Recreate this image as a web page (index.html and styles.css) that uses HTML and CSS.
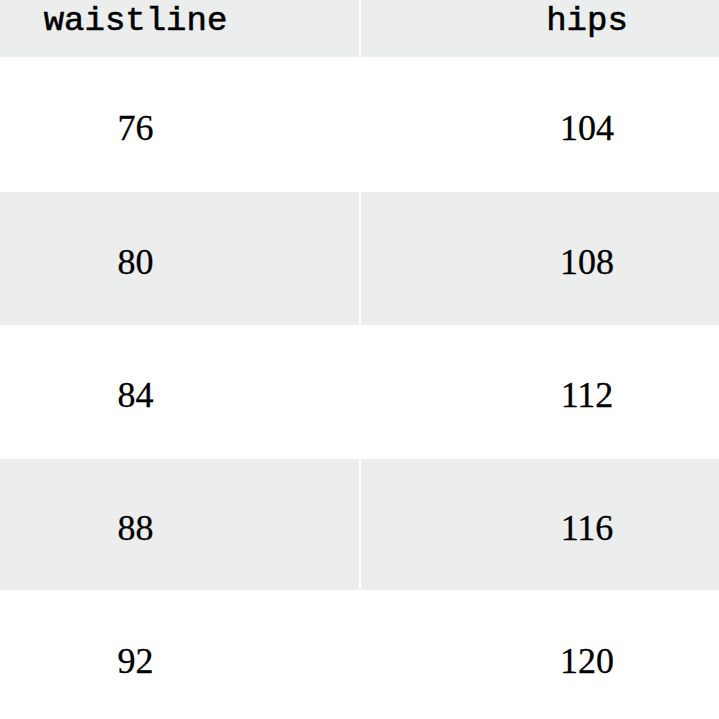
FILE: index.html
```html
<!DOCTYPE html>
<html>
<head>
<meta charset="utf-8">
<link rel="stylesheet" href="styles.css">
</head>
<body>
<div class="viewport">
<div class="table">
  <div class="cell head">waistline</div>
  <div class="cell head">hips</div>
  <div class="cell r1">76</div>
  <div class="cell r1">104</div>
  <div class="cell r2 alt">80</div>
  <div class="cell r2 alt">108</div>
  <div class="cell r3">84</div>
  <div class="cell r3">112</div>
  <div class="cell r4 alt">88</div>
  <div class="cell r4 alt">116</div>
  <div class="cell r5">92</div>
  <div class="cell r5">120</div>
</div>
</div>
</body>
</html>
```
FILE: styles.css
```css
html, body {
  margin: 0;
  padding: 0;
  background: #ffffff;
}
.viewport {
  width: 719px;
  height: 719px;
  overflow: hidden;
}
.table {
  display: grid;
  grid-template-columns: 447px 452px;
  grid-template-rows: 77px 135px 133px 134px 131px 135px;
  column-gap: 2px;
  margin-left: -88px;
  margin-top: -20px;
  width: 901px;
  background: #ffffff;
}
.cell {
  display: flex;
  align-items: center;
  justify-content: center;
  padding-top: 6px;
  box-sizing: border-box;
  font-family: "Liberation Serif", "Times New Roman", serif;
  font-size: 36px;
  color: #000;
  background: #ffffff;
  -webkit-text-stroke: 0.3px #000;
}
.head {
  font-family: "Liberation Mono", "Courier New", monospace;
  font-size: 34px;
  padding-top: 4px;
  background: #eceded;
  -webkit-text-stroke: 0.6px #000;
}
.alt {
  background: #eceded;
}
```
